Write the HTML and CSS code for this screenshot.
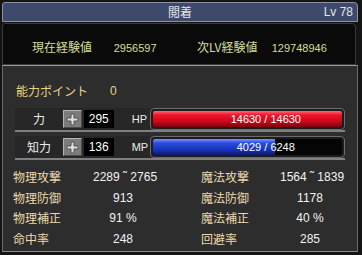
FILE: index.html
```html
<!DOCTYPE html>
<html lang="ja">
<head>
    <meta charset="UTF-8">
    <title>閲着</title>
    <link rel="stylesheet" href="styles.css">
</head>
<body>
    <div class="window">
        <div class="titlebar">
            <span></span>
            <span class="title">閲着</span>
            <span class="lv">Lv 78</span>
        </div>
        <div class="exp">
            <div class="exp_item exp_now">
                <span class="exp_label">現在経験値</span>
                <span class="num">2956597</span>
            </div>
            <div class="exp_item exp_next">
                <span class="exp_label">次LV経験値</span>
                <span class="num">129748946</span>
            </div>
        </div>
        <div class="main">
            <div class="points">
                <span class="points_label">能力ポイント</span>
                <span class="num">0</span>
            </div>
            <!-- 力 / HP -->
            <div class="ability">
                <span class="ability_name">力</span>
                <i class="plus">
                    <svg width="13" height="13" viewBox="0 0 13 13"><path d="M5 1h3v4h4v3H8v4H5V8H1V5h4z" fill="#dcdcdc" stroke="#555" stroke-width="1"/></svg>
                </i>
                <span class="ability_val num">295</span>
                <span class="gauge_label">HP</span>
                <div class="gauge">
                    <div class="gauge_in">
                        <div class="fill fill_hp" style="width:100%"></div>
                        <span class="gauge_text num">14630 / 14630</span>
                    </div>
                </div>
            </div>
            <!-- 知力 / MP -->
            <div class="ability">
                <span class="ability_name">知力</span>
                <i class="plus">
                    <svg width="13" height="13" viewBox="0 0 13 13"><path d="M5 1h3v4h4v3H8v4H5V8H1V5h4z" fill="#dcdcdc" stroke="#555" stroke-width="1"/></svg>
                </i>
                <span class="ability_val num">136</span>
                <span class="gauge_label">MP</span>
                <div class="gauge">
                    <div class="gauge_in">
                        <div class="fill fill_mp" style="width:64.5%"></div>
                        <span class="gauge_text num">4029 / 6248</span>
                    </div>
                </div>
            </div>
            <div class="stats">
                <span class="stat_label">物理攻撃</span><span class="stat_val num">2289 ˜ 2765</span>
                <span></span>
                <span class="stat_label">魔法攻撃</span><span class="stat_val num">1564 ˜ 1839</span>

                <span class="stat_label">物理防御</span><span class="stat_val num">913</span>
                <span></span>
                <span class="stat_label">魔法防御</span><span class="stat_val num">1178</span>

                <span class="stat_label">物理補正</span><span class="stat_val num">91 %</span>
                <span></span>
                <span class="stat_label">魔法補正</span><span class="stat_val num">40 %</span>

                <span class="stat_label">命中率</span><span class="stat_val num">248</span>
                <span></span>
                <span class="stat_label">回避率</span><span class="stat_val num">285</span>
            </div>
        </div>
    </div>
</body>
</html>
```

FILE: styles.css
```css
*{
    margin: 0;
    padding: 0;
    box-sizing: border-box;
}
html, body{
    background-color: #141414;
}
body{
    font-family: "Noto Sans CJK JP", "Liberation Sans", sans-serif;
    font-size: 12px;
    line-height: 16px;
}
.num{
    font-family: "Liberation Sans", "Noto Sans CJK JP", sans-serif;
    font-size: 11px;
    white-space: nowrap;
}
.window{
    width: 362px;
    height: 255px;
    padding-top: 2px;
    overflow: hidden;
}
/* タイトルバー */
.titlebar{
    display: grid;
    grid-template-columns: 1fr auto 1fr;
    align-items: center;
    height: 20px;
    margin: 0 4px 0 2px;
    padding: 0 4px;
    background-color: #3e4a6c;
    border: 1px solid #8d93a3;
    border-radius: 3px 4px 0 0;
    color: #e6e6e6;
}
.lv{
    justify-self: end;
    font-family: "Liberation Sans", sans-serif;
    font-size: 12px;
}
/* 経験値 */
.exp{
    display: flex;
    align-items: center;
    height: 42px;
    margin: 1px 6px 0 2px;
    padding: 6px 0 0 29px;
    background-color: #0a0a0a;
    border: 1px solid #3a3a3a;
    border-radius: 3px 4px 0 0;
    color: #d6de9e;
}
.exp_now{
    width: 165px;
}
.exp_label{
    display: inline-block;
}
.exp_now .exp_label{
    width: 79px;
}
.exp_next .exp_label{
    width: 72px;
}
/* メイン */
.main{
    height: 187px;
    margin: 0 4px 0 2px;
    padding-top: 17px;
    background-color: #2d2d2d;
    border-top: 1px solid #9a9a9a;
    border-left: 1px solid #6a6a6a;
    border-right: 1px solid #6a6a6a;
    border-bottom: 1px solid #8a8a8a;
}
.points{
    display: flex;
    padding-left: 13px;
    color: #e8d47e;
}
.points_label{
    width: 94px;
}
.points .num{
    font-size: 12px;
}
.ability{
    display: flex;
    align-items: center;
    height: 24px;
    margin: 9px 12px 0 12px;
    background-color: rgba(0, 0, 0, 0.12);
    border-bottom: 2px solid #808080;
    color: #ececec;
}
.ability + .ability{
    margin-top: 4px;
}
.ability_name{
    width: 48px;
    text-align: center;
}
.plus{
    display: flex;
    justify-content: center;
    align-items: center;
    width: 19px;
    height: 18px;
    background-color: #7c7c7c;
    border: 1px solid #4a4a4a;
    border-top-color: #b4b4b4;
    border-left-color: #b4b4b4;
}
.ability_val{
    width: 30px;
    height: 18px;
    margin-left: 2px;
    background-color: #000;
    text-align: center;
    line-height: 18px;
    font-size: 12px;
    color: #fff;
}
.gauge_label{
    width: 16px;
    margin-left: 18px;
    font-family: "Liberation Sans", sans-serif;
    font-size: 11px;
}
.gauge{
    width: 196px;
    height: 22px;
    margin-left: 2px;
    padding: 2px;
    background-color: #1c1c1c;
    border: 1px solid #6c6c6c;
    border-radius: 4px;
}
.gauge_in{
    position: relative;
    height: 16px;
    background-color: #050505;
    border-radius: 2px;
    overflow: hidden;
}
.fill{
    height: 100%;
}
.fill_hp{
    background: linear-gradient(#ff6a78 0, #f01428 25%, #c80a18 65%, #7a0410 100%);
}
.fill_mp{
    background: linear-gradient(#7a96ff 0, #2a4ce0 25%, #1a34b8 65%, #0a1a70 100%);
}
.gauge_text{
    position: absolute;
    top: 0;
    left: 37px;
    right: 0;
    text-align: center;
    line-height: 16px;
    color: #fff;
}
/* ステータス */
.stats{
    display: grid;
    grid-template-columns: 80px 60px 48px 79px 60px;
    grid-auto-rows: 20.5px;
    align-items: center;
    margin-top: 7px;
    padding-left: 10px;
}
.stat_label{
    color: #ead9ac;
}
.stat_val{
    text-align: center;
    color: #f2f2f2;
    font-size: 12px;
}
```
